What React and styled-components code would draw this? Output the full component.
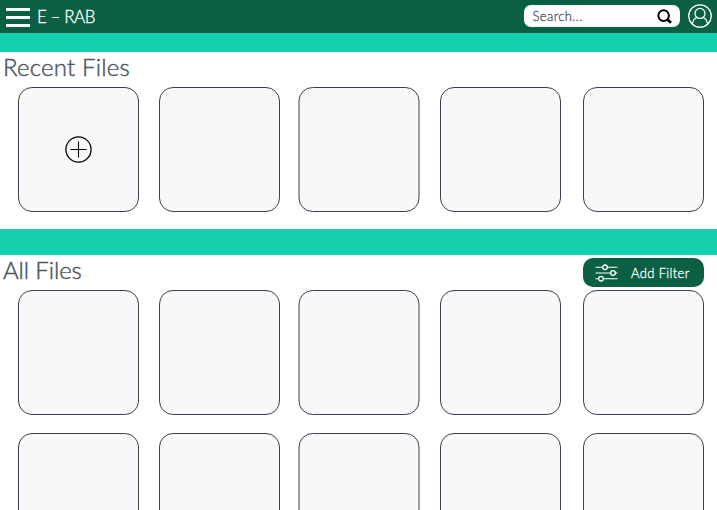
import React from "react";
import styled, { createGlobalStyle } from "styled-components";

const GlobalStyle = createGlobalStyle`
  * { box-sizing: border-box; }
  body {
    margin: 0;
    background: #fff;
    font-family: Lato, "Open Sans", sans-serif;
    -webkit-text-stroke-width: 0.3px;
    overflow: hidden;
  }
`;

const Page = styled.div`
  width: 717px;
  height: 510px;
  overflow: hidden;
`;

const Header = styled.header`
  display: flex;
  align-items: center;
  height: 33px;
  padding: 0 5px 0 6px;
  background: #0b6044;
  color: #fff;
`;

const MenuButton = styled.button`
  display: flex;
  flex-direction: column;
  justify-content: space-between;
  width: 24px;
  height: 19px;
  margin: 1px 0 0;
  padding: 0;
  border: 0;
  background: none;
`;

const MenuBar = styled.span`
  height: 3px;
  background: #fff;
`;

const Brand = styled.span`
  flex: 1;
  margin-left: 7px;
  font-size: 17px;
  font-weight: 300;
  line-height: 33px;
  letter-spacing: -0.45px;
  white-space: nowrap;
`;

const SearchBox = styled.label`
  display: flex;
  align-items: center;
  justify-content: space-between;
  width: 156px;
  height: 22px;
  margin-top: -1px;
  padding: 0 8px 0 9px;
  border-radius: 7px;
  background: #fff;
`;

const SearchText = styled.span`
  color: #4b5563;
  font-size: 13px;
  font-weight: 300;
  line-height: 22px;
  letter-spacing: 0.4px;
`;

const Avatar = styled.svg`
  width: 24px;
  height: 24px;
  margin: -1px 0 0 8.5px;
`;

const Band = styled.div`
  height: ${({ $height }) => $height}px;
  background: #14d0ae;
`;

const Section = styled.section`
  height: ${({ $height }) => $height}px;
`;

const SectionHead = styled.div`
  display: flex;
  justify-content: space-between;
  align-items: flex-start;
  height: 35px;
  padding: 0 13px 0 3px;
`;

const Title = styled.h2`
  margin: 0;
  color: #4b5563;
  font-size: 24px;
  font-weight: 300;
  line-height: 30px;
  letter-spacing: ${({ $spacing }) => $spacing}px;
  -webkit-text-stroke-width: 0.45px;
`;

const FilterButton = styled.button`
  display: flex;
  align-items: center;
  width: 121px;
  height: 29px;
  margin-top: 3px;
  padding: 0 0 0 12px;
  border: 0;
  border-radius: 10px;
  background: #0b6044;
  color: #fff;
  font: 300 13px/30px Lato, sans-serif;
  letter-spacing: 0.35px;
  white-space: nowrap;
`;

const FilterIcon = styled.svg`
  flex: none;
  width: 23px;
  height: 18px;
  margin: 0 13px 0 0;
`;

const FileGrid = styled.div`
  display: grid;
  grid-template-columns: 141px 140px 141px 143px 121px;
  grid-auto-rows: 125px;
  row-gap: 18px;
  padding-left: 18px;
`;

const FileCard = styled.div`
  display: flex;
  align-items: center;
  justify-content: center;
  width: 121px;
  border: 1px solid #374151;
  border-radius: 14px;
  background: #f8f8f8;

  &:nth-child(5n + 3) {
    transform: translateX(-0.5px);
  }
`;

function FileCards({ count, first }) {
  return (
    <FileGrid>
      {Array.from({ length: count }, (_, i) => (
        <FileCard key={i}>{i === 0 && first}</FileCard>
      ))}
    </FileGrid>
  );
}

function AddIcon() {
  return (
    <svg width="27" height="27" viewBox="0 0 27 27" fill="none" stroke="#000">
      <circle cx="13.5" cy="13.5" r="12.6" strokeWidth="1.3" />
      <path d="M13.5 5.5v16M5.5 13.5h16" strokeWidth="1.1" />
    </svg>
  );
}

export default function App() {
  return (
    <Page>
      <GlobalStyle />
      <Header>
        <MenuButton aria-label="Menu">
          <MenuBar />
          <MenuBar />
          <MenuBar />
        </MenuButton>
        <Brand>E – RAB</Brand>
        <SearchBox>
          <SearchText>Search...</SearchText>
          <svg width="15" height="15" viewBox="0 0 15 15" fill="none" stroke="#000">
            <circle cx="6.6" cy="6.6" r="5.3" strokeWidth="2" />
            <path d="M10.4 10.4L14 13.8" strokeWidth="2.8" />
          </svg>
        </SearchBox>
        <Avatar viewBox="0 0 24 24" fill="none" stroke="#fff" strokeWidth="1.3">
          <circle cx="12" cy="12" r="11.2" />
          <circle cx="12" cy="9.4" r="5" />
          <path d="M4.4 20c.5-3.4 2.4-5.8 5-6.6M19.6 20c-.5-3.4-2.4-5.8-5-6.6" />
        </Avatar>
      </Header>
      <Band $height={19} />
      <Section $height={177}>
        <SectionHead>
          <Title $spacing={0.2}>Recent Files</Title>
        </SectionHead>
        <FileCards count={5} first={<AddIcon />} />
      </Section>
      <Band $height={26} />
      <Section $height={255}>
        <SectionHead>
          <Title $spacing={-0.1}>All Files</Title>
          <FilterButton>
            <FilterIcon viewBox="0 0 23 18" fill="none" stroke="#fff">
              <path d="M.5 3.3h7m5 0h10M.5 9h15m5 0h2M.5 14.7h3m5 0h14" strokeWidth="1.1" />
              <g strokeWidth="1.3">
                <circle cx="10" cy="3.3" r="2.3" />
                <circle cx="18" cy="9" r="2.3" />
                <circle cx="6" cy="14.7" r="2.3" />
              </g>
            </FilterIcon>
            Add Filter
          </FilterButton>
        </SectionHead>
        <FileCards count={10} />
      </Section>
    </Page>
  );
}
